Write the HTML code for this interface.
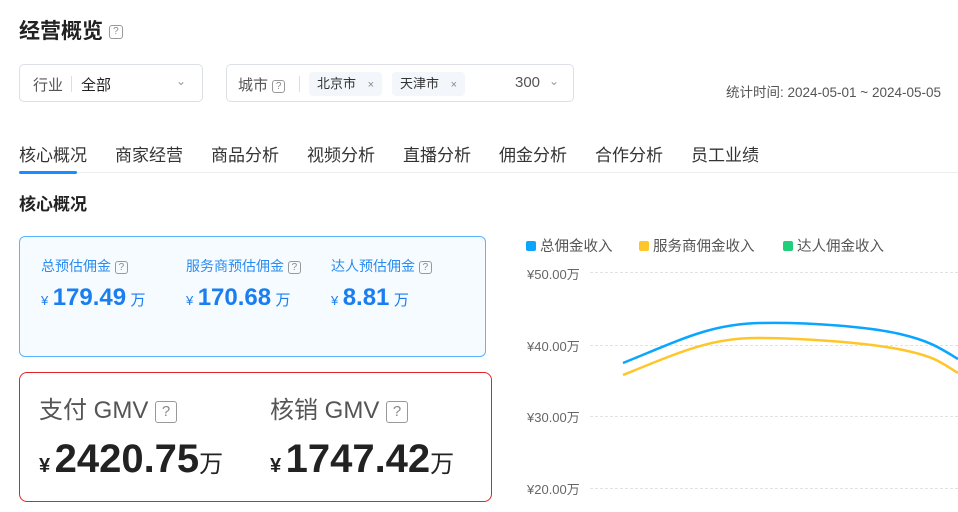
<!DOCTYPE html>
<html><head><meta charset="utf-8"><style>
*{margin:0;padding:0;box-sizing:border-box}
body{width:958px;height:512px;overflow:hidden;background:#fff;font-family:"Liberation Sans","Noto Sans CJK SC",sans-serif;color:#222;position:relative}
.a{position:absolute;white-space:nowrap}
.q{display:inline-block;width:14px;height:14px;border:1.5px solid #999;border-radius:3px;font-size:10px;line-height:11px;text-align:center;color:#888;vertical-align:middle}
.box{position:absolute;border:1px solid #dcdfe6;border-radius:5px;height:38px;top:64px}
.tag{position:absolute;top:7px;height:24px;background:#f3f6fa;border-radius:4px;font-size:13px;line-height:24px;padding:0 8px;color:#333}
.tab{position:absolute;top:141px;font-size:17px;color:#333}
.lab{font-size:14px;color:#2b8df2}
.val{font-size:24px;font-weight:bold;color:#1a7ef0}
.yl{position:absolute;left:527px;font-size:13px;color:#666}
.gl{position:absolute;left:590px;width:368px;border-top:1px dashed #e2e2e2}
</style></head><body>
<div class="a" style="left:19px;top:15px;font-size:21px;font-weight:bold;color:#222">经营概览 <span class="q" style="font-weight:normal">?</span></div>
<div class="box" style="left:19px;width:184px">
 <span class="a" style="left:13px;top:9px;font-size:15px;color:#555">行业</span>
 <span class="a" style="left:51px;top:11px;height:16px;border-left:1px solid #ddd"></span>
 <span class="a" style="left:61px;top:9px;font-size:15px;color:#222">全部</span>
 <span class="a" style="left:156px;top:9px;font-size:12px;color:#999">⌄</span>
</div>
<div class="box" style="left:226px;width:348px">
 <span class="a" style="left:11px;top:9px;font-size:15px;color:#555">城市 <span class="q" style="width:13px;height:13px">?</span></span>
 <span class="a" style="left:72px;top:11px;height:16px;border-left:1px solid #ddd"></span>
 <span class="tag" style="left:82px">北京市 <span style="color:#888;font-size:11px;margin-left:8px">×</span></span>
 <span class="tag" style="left:165px">天津市 <span style="color:#888;font-size:11px;margin-left:8px">×</span></span>
 <span class="a" style="left:288px;top:9px;font-size:15px;color:#555">300</span>
 <span class="a" style="left:322px;top:9px;font-size:12px;color:#999">⌄</span>
</div>
<div class="a" style="left:726px;top:81px;font-size:13.5px;color:#555">统计时间: 2024-05-01 ~ 2024-05-05</div>
<div class="tab" style="left:19px">核心概况</div>
<div class="tab" style="left:115px">商家经营</div>
<div class="tab" style="left:211px">商品分析</div>
<div class="tab" style="left:307px">视频分析</div>
<div class="tab" style="left:403px">直播分析</div>
<div class="tab" style="left:499px">佣金分析</div>
<div class="tab" style="left:595px">合作分析</div>
<div class="tab" style="left:691px">员工业绩</div>
<div class="a" style="left:19px;top:172px;width:939px;border-top:1px solid #eee"></div>
<div class="a" style="left:19px;top:171px;width:58px;height:3px;background:#1a8cff;border-radius:2px"></div>
<div class="a" style="left:19px;top:190px;font-size:17px;font-weight:bold">核心概况</div>
<div class="a" style="left:19px;top:236px;width:467px;height:121px;border:1.5px solid #5ab4ff;border-radius:6px;background:#f5fbff"></div>
<div class="a lab" style="left:41px;top:256px">总预估佣金 <span class="q" style="width:13px;height:13px">?</span></div>
<div class="a lab" style="left:186px;top:256px">服务商预估佣金 <span class="q" style="width:13px;height:13px">?</span></div>
<div class="a lab" style="left:331px;top:256px">达人预估佣金 <span class="q" style="width:13px;height:13px">?</span></div>
<div class="a" style="left:41px;top:284px;color:#1a7ef0"><span style="font-size:13px">¥</span> <span class="val">179.49</span> <span style="font-size:15px">万</span></div>
<div class="a" style="left:186px;top:284px;color:#1a7ef0"><span style="font-size:13px">¥</span> <span class="val">170.68</span> <span style="font-size:15px">万</span></div>
<div class="a" style="left:331px;top:284px;color:#1a7ef0"><span style="font-size:13px">¥</span> <span class="val">8.81</span> <span style="font-size:15px">万</span></div>
<div class="a" style="left:19px;top:372px;width:473px;height:130px;border:1px solid #e0242a;border-radius:8px"></div>
<div class="a" style="left:39px;top:390px;font-size:24px;color:#555">支付 GMV <span class="q" style="width:22px;height:22px;font-size:15px;line-height:19px">?</span></div>
<div class="a" style="left:270px;top:390px;font-size:24px;color:#555">核销 GMV <span class="q" style="width:22px;height:22px;font-size:15px;line-height:19px">?</span></div>
<div class="a" style="left:39px;top:437px;color:#222"><span style="font-size:20px;font-weight:bold">¥</span> <span style="font-size:40px;font-weight:bold">2420.75</span><span style="font-size:24px">万</span></div>
<div class="a" style="left:270px;top:437px;color:#222"><span style="font-size:20px;font-weight:bold">¥</span> <span style="font-size:40px;font-weight:bold">1747.42</span><span style="font-size:24px">万</span></div>
<div class="a" style="left:526px;top:235px;font-size:14.5px;color:#555"><span style="display:inline-block;width:10px;height:10px;border-radius:2px;background:#0aa5ff"></span> 总佣金收入</div>
<div class="a" style="left:639px;top:235px;font-size:14.5px;color:#555"><span style="display:inline-block;width:10px;height:10px;border-radius:2px;background:#ffc62b"></span> 服务商佣金收入</div>
<div class="a" style="left:783px;top:235px;font-size:14.5px;color:#555"><span style="display:inline-block;width:10px;height:10px;border-radius:2px;background:#1fcf7a"></span> 达人佣金收入</div>
<div class="yl" style="top:264px">¥50.00万</div><div class="gl" style="top:272px"></div>
<div class="yl" style="top:336px">¥40.00万</div><div class="gl" style="top:345px"></div>
<div class="yl" style="top:407px">¥30.00万</div><div class="gl" style="top:416px"></div>
<div class="yl" style="top:479px">¥20.00万</div><div class="gl" style="top:488px"></div>
<svg class="a" style="left:0;top:0" width="958" height="512">
<path d="M623 363 C680 340 710 324 760 323 S870 327 900 334 S940 348 958 359" fill="none" stroke="#0aa5ff" stroke-width="2.5"/>
<path d="M623 375 C680 352 710 338 757 338 S870 343 903 350 S940 362 958 373" fill="none" stroke="#ffc62b" stroke-width="2.5"/>
</svg>
</body></html>
